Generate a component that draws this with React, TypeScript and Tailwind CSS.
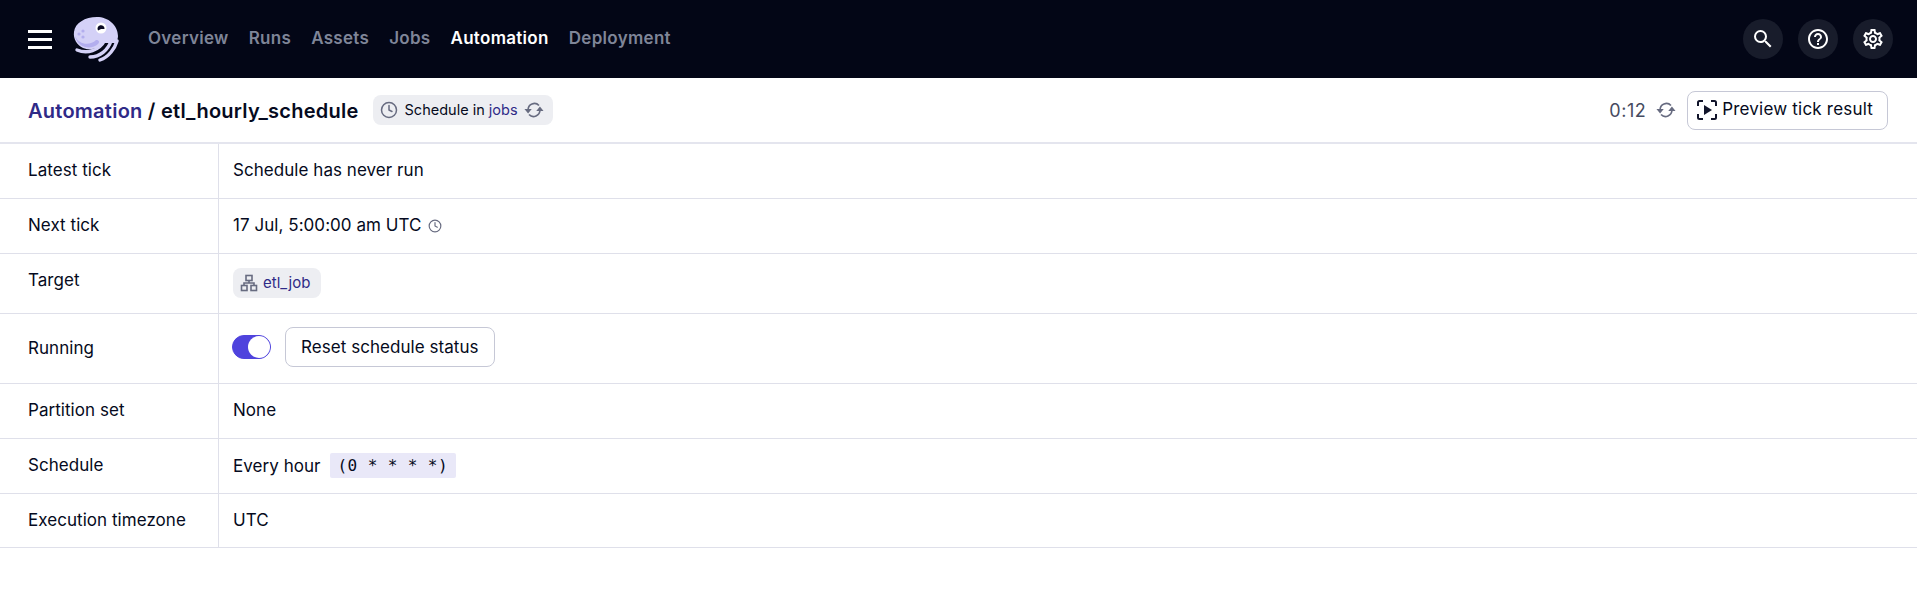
import { Clock } from "lucide-react";
import type { ReactNode } from "react";

const NAV_ITEMS = ["Overview", "Runs", "Assets", "Jobs", "Automation", "Deployment"];

const Logo = () => (
  <svg width="46" height="46" viewBox="0 0 46 46" fill="none">
    <path
      d="M24 1C35 1 45 9 45 20C45 22 44 25 43 27L31 27C27 32 18 35 10 32C4 29 0 23 1 16C2 7 12 1 24 1Z"
      fill="#d4d1f7"
    />
    <path d="M2 20C6 29 17 30 23 24C26 24 27 26 25 28C19 34 5 33 2 20Z" fill="#b3aeee" />
    <path d="M4 34C14 38 26 35 32 24" stroke="#d4d1f7" strokeWidth="3.4" strokeLinecap="round" />
    <path d="M17 41C27 41 35 34 38 25" stroke="#d4d1f7" strokeWidth="3.4" strokeLinecap="round" />
    <path d="M27 44C36 41 42 32 44 25" stroke="#d4d1f7" strokeWidth="3.4" strokeLinecap="round" />
    <circle cx="28" cy="12" r="5.5" fill="#fff" />
    <path d="M25 14.500A3.500 3.500 0 1 1 31.500 13L28 13Z" fill="#0a0a23" />
    <circle cx="6" cy="18" r="1.6" fill="#b3aeee" />
    <circle cx="10" cy="15" r="1.6" fill="#b3aeee" />
    <circle cx="10" cy="21" r="1.6" fill="#b3aeee" />
  </svg>
);

const NavButton = ({ d }: { d: string }) => (
  <button className="flex h-10 w-10 items-center justify-center rounded-full bg-[#181c2b] text-white">
    <svg width="24" height="24" viewBox="0 0 24 24" fill="currentColor">
      <path d={d} />
    </svg>
  </button>
);

const SEARCH =
  "M15.5 14h-.79l-.28-.27A6.471 6.471 0 0 0 16 9.5 6.5 6.5 0 1 0 9.5 16c1.61 0 3.09-.59 4.23-1.57l.27.28v.79l5 4.99L20.49 19l-4.99-5zm-6 0C7.01 14 5 11.99 5 9.5S7.01 5 9.5 5 14 7.01 14 9.5 11.99 14 9.5 14z";
const HELP =
  "M11 18h2v-2h-2v2zm1-16C6.48 2 2 6.48 2 12s4.48 10 10 10 10-4.48 10-10S17.52 2 12 2zm0 18c-4.41 0-8-3.59-8-8s3.59-8 8-8 8 3.59 8 8-3.59 8-8 8zm0-14c-2.21 0-4 1.79-4 4h2c0-1.1.9-2 2-2s2 .9 2 2c0 2-3 1.75-3 5h2c0-2.25 3-2.5 3-5 0-2.21-1.79-4-4-4z";
const SETTINGS =
  "M19.43 12.98c.04-.32.07-.64.07-.98 0-.34-.03-.66-.07-.98l2.11-1.65c.19-.15.24-.42.12-.64l-2-3.46c-.09-.16-.26-.25-.44-.25-.06 0-.12.01-.17.03l-2.49 1c-.52-.4-1.08-.73-1.69-.98l-.38-2.65C14.46 2.18 14.25 2 14 2h-4c-.25 0-.46.18-.49.42l-.38 2.65c-.61.25-1.17.59-1.69.98l-2.49-1c-.06-.02-.12-.03-.18-.03-.17 0-.34.09-.43.25l-2 3.46c-.13.22-.07.49.12.64l2.11 1.65c-.04.32-.07.65-.07.98 0 .33.03.66.07.98l-2.11 1.65c-.19.15-.24.42-.12.64l2 3.46c.09.16.26.25.44.25.06 0 .12-.01.17-.03l2.49-1c.52.4 1.08.73 1.69.98l.38 2.65c.03.24.24.42.49.42h4c.25 0 .46-.18.49-.42l.38-2.65c.61-.25 1.17-.59 1.69-.98l2.49 1c.06.02.12.03.18.03.17 0 .34-.09.43-.25l2-3.46c.12-.22.07-.49-.12-.64l-2.11-1.65zm-1.98-1.71c.04.31.05.52.05.73 0 .21-.02.43-.05.73l-.14 1.13.89.7 1.08.84-.7 1.21-1.27-.51-1.04-.42-.9.68c-.43.32-.84.56-1.25.73l-1.06.43-.16 1.13-.2 1.35h-1.4l-.19-1.35-.16-1.13-1.06-.43c-.43-.18-.83-.41-1.23-.71l-.91-.7-1.06.43-1.27.51-.7-1.21 1.08-.84.89-.7-.14-1.13c-.03-.31-.05-.54-.05-.74s.02-.43.05-.73l.14-1.13-.89-.7-1.08-.84.7-1.21 1.27.51 1.04.42.9-.68c.43-.32.84-.56 1.25-.73l1.06-.43.16-1.13.2-1.35h1.39l.19 1.35.16 1.13 1.06.43c.43.18.83.41 1.23.71l.91.7 1.06-.43 1.27-.51.7 1.21-1.07.85-.89.7.14 1.13zM12 8c-2.21 0-4 1.79-4 4s1.79 4 4 4 4-1.79 4-4-1.79-4-4-4zm0 6c-1.1 0-2-.9-2-2s.9-2 2-2 2 .9 2 2-.9 2-2 2z";

const SyncIcon = () => (
  <svg width="20" height="20" viewBox="1 1 22 22" fill="none" stroke="#676b80" strokeWidth="1.800">
    <path d="M5.500 12a7 7 0 0 1 12-5" />
    <path d="M18.500 12a7 7 0 0 1-12 5" />
    <path d="M1.500 11h8l-4 4.800z" fill="#676b80" stroke="none" />
    <path d="M22.500 13h-8l4-4.800z" fill="#676b80" stroke="none" />
  </svg>
);

const JobIcon = () => (
  <svg width="18" height="18" viewBox="0 0 18 18" fill="none" stroke="#676b80" strokeWidth="1.6">
    <rect x="6" y="1.500" width="6" height="5" />
    <rect x="1.500" y="11.500" width="5.500" height="5" />
    <rect x="11" y="11.500" width="5.500" height="5" />
    <path d="M9 6.500V9M4 11.500V9H14V11.500" />
  </svg>
);

const PreviewIcon = () => (
  <svg width="20" height="20" viewBox="0 0 20 20" fill="none" stroke="#11142a" strokeWidth="2">
    <path d="M1 6V2.500C1 1.700 1.700 1 2.500 1H6M14 1H17.500C18.300 1 19 1.700 19 2.500V6M19 14V17.500C19 18.300 18.300 19 17.500 19H14M6 19H2.500C1.700 19 1 18.300 1 17.500V14" />
    <path d="M7 5L15 10L7 15Z" fill="#11142a" stroke="none" />
  </svg>
);

const Row = ({ label, className = "", labelClass = "pt-[14px]", valueClass = "pt-[14px]", children }: {
  label: string;
  className?: string;
  labelClass?: string;
  valueClass?: string;
  children: ReactNode;
}) => (
  <div className={`flex border-b border-[#dfe0ea] ${className}`}>
    <div className={`flex w-[219px] shrink-0 items-start border-r border-[#dfe0ea] pl-7 leading-6 ${labelClass}`}>
      {label}
    </div>
    <div className={`flex items-start pl-[14px] leading-6 ${valueClass}`}>{children}</div>
  </div>
);

export default function App() {
  return (
    <div className="min-h-[606px] bg-white font-['Inter',sans-serif] text-[17px] tracking-[0.05px] text-[#050a20]">
      <nav className="flex h-[78px] items-center justify-between bg-[#030616] pl-7 pr-6">
        <div className="flex items-center">
          <div className="flex w-[24px] flex-col gap-[5px]">
            <span className="h-[3px] bg-white" />
            <span className="h-[3px] bg-white" />
            <span className="h-[3px] bg-white" />
          </div>
          <div className="ml-[21px] mr-[29px]">
            <Logo />
          </div>
          <div className="flex gap-[20px] text-[17px] font-semibold tracking-[0.3px] text-[#7f8598]">
            {NAV_ITEMS.map((item) => (
              <a key={item} className={item === "Automation" ? "text-white" : ""}>
                {item}
              </a>
            ))}
          </div>
        </div>
        <div className="flex gap-[15px]">
          <NavButton d={SEARCH} />
          <NavButton d={HELP} />
          <NavButton d={SETTINGS} />
        </div>
      </nav>

      <header className="flex h-[66px] items-center justify-between border-b-2 border-[#e4e5ee] pl-7 pr-[29px]">
        <div className="flex items-center">
          <h1 className="mt-[1px] text-[20px] font-semibold tracking-[0.25px]">
            <a className="text-[#2f2a87]">Automation</a> / etl_hourly_schedule
          </h1>
          <div className="ml-[14px] flex h-[30px] items-center rounded-lg bg-[#edeef2] pl-[7px] pr-[9px] text-[14.5px] tracking-[0px]">
            <Clock size={18} className="text-[#676b80]" />
            <span className="ml-[7px] mr-[6px]">
              Schedule in <a className="text-[#2f2a87]">jobs</a>
            </span>
            <SyncIcon />
          </div>
        </div>
        <div className="flex items-center">
          <span className="text-[18px] tracking-[0.5px] text-[#464b60]">0:12</span>
          <span className="ml-[10px] flex">
            <SyncIcon />
          </span>
          <button className="ml-[11px] flex h-[39px] items-center gap-[5px] rounded-lg border border-[#c6c8d6] pl-[9px] pr-[14px] tracking-[0.2px]">
            <PreviewIcon />
            Preview tick result
          </button>
        </div>
      </header>

      <section>
        <Row label="Latest tick" className="h-[55px]">
          Schedule has never run
        </Row>
        <Row label="Next tick" className="h-[55px]">
          <span className="flex items-center gap-[6px]">
            17 Jul, 5:00:00 am UTC
            <Clock size={14} className="mt-[1px] text-[#676b80]" />
          </span>
        </Row>
        <Row label="Target" className="h-[60px]">
          <div className="flex h-[30px] items-center gap-[5px] rounded-lg bg-[#edeef2] px-[7px] pr-[11px] text-[15px] tracking-[0px] text-[#2f2a87]">
            <JobIcon />
            etl_job
          </div>
        </Row>
        <Row label="Running" className="h-[70px]" labelClass="pt-[22px]" valueClass="pt-[13px]">
          <div className="flex items-center gap-[14px]">
            <span className="ml-[-1px] flex h-6 w-[39px] items-center justify-end rounded-full border border-[#4f43dd] bg-[#4f43dd]">
              <span className="h-[22px] w-[22px] rounded-full bg-white" />
            </span>
            <button className="flex h-10 items-center rounded-lg border border-[#c6c8d6] px-[15px]">
              Reset schedule status
            </button>
          </div>
        </Row>
        <Row label="Partition set" className="h-[55px]">
          None
        </Row>
        <Row label="Schedule" className="h-[55px]">
          <span className="flex items-center gap-[9px]">
            Every hour
            <code className="flex h-[25px] items-center rounded-[2px] bg-[#e9e8f8] px-[8px] font-['DejaVu_Sans_Mono',monospace] text-[16px] tracking-[0.4px] slashed-zero">
              (0 * * * *)
            </code>
          </span>
        </Row>
        <Row label="Execution timezone" className="h-[54px]">
          UTC
        </Row>
      </section>
    </div>
  );
}
